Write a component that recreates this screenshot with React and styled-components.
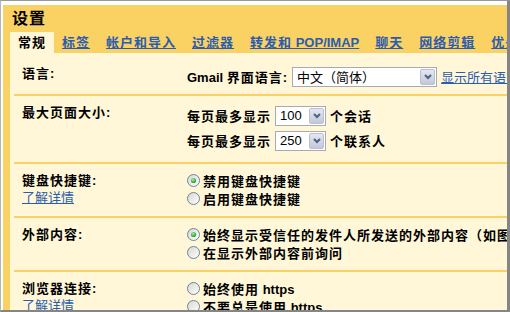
import React from 'react'
import styled, { createGlobalStyle } from 'styled-components'

const GlobalStyle = createGlobalStyle`
  html, body {
    margin: 0;
    padding: 0;
    background: #fff;
  }
  body {
    font-family: "Liberation Sans", "Noto Sans CJK SC", sans-serif;
    font-size: 13px;
    color: #000;
  }
`

const Frame = styled.div`
  box-sizing: border-box;
  width: 510px;
  height: 312px;
  overflow: hidden;
  background: #fff;
  border-style: solid;
  border-color: #9a9a9a #858585 #858585 #b4b4b4;
  border-width: 1px 3px 2px 1px;
  padding: 4px 0 0 2px;
`

const Panel = styled.div`
  width: 640px;
  background: #fad163;
  padding-left: 7px;
`

const Title = styled.h1`
  margin: 0;
  padding-left: 2px;
  height: 27px;
  line-height: 27px;
  font-size: 16px;
  font-weight: bold;
  letter-spacing: 1px;
`

const Tabs = styled.div`
  display: flex;
  height: 21px;
  white-space: nowrap;
`

const Tab = styled.a`
  padding: 0 8px;
  line-height: 21px;
  font-weight: bold;
  letter-spacing: 1px;
  color: ${({ $active }) => ($active ? '#000' : '#2a5db0')};
  background: ${({ $active }) => ($active ? '#fff7d7' : 'transparent')};
  text-decoration: ${({ $active }) => ($active ? 'none' : 'underline')};
  cursor: pointer;
`

const En = styled.span`
  letter-spacing: 0;
`

const Content = styled.div`
  background: #fff7d7;
  padding-left: 4px;
`

const Row = styled.div`
  display: grid;
  grid-template-columns: 165px 1fr;
  border-top: ${({ $first }) => ($first ? 'none' : '2px solid #fad163')};
  padding: ${({ $first }) => ($first ? '11px 0 5px 8px' : '7px 0 9px 8px')};
`

const Label = styled.div`
  padding-top: 1px;
  line-height: 17px;
  font-weight: bold;
  letter-spacing: 1px;
  white-space: nowrap;
`

const HelpLink = styled.a`
  display: block;
  width: max-content;
  font-weight: normal;
  letter-spacing: 0;
  color: #2a5db0;
  text-decoration: underline;
  cursor: pointer;
`

const Value = styled.div`
  display: flex;
  flex-direction: column;
`

const Line = styled.div`
  display: flex;
  align-items: center;
  gap: ${({ $gap }) => $gap || 4}px;
  height: ${({ $h }) => $h}px;
  font-weight: bold;
  letter-spacing: 1px;
  white-space: nowrap;
`

const TextLink = styled.a`
  font-weight: normal;
  letter-spacing: 0;
  color: #2a5db0;
  text-decoration: underline;
  cursor: pointer;
`

const SelectBox = styled.div`
  box-sizing: border-box;
  display: flex;
  align-items: center;
  flex-shrink: 0;
  width: ${({ $w }) => $w}px;
  height: 20px;
  padding-left: 4px;
  border: 1px solid #a5acb2;
  background: #fff;
  font-weight: normal;
  letter-spacing: 0;
`

const SelectText = styled.span`
  flex: 1;
`

const ArrowButton = styled.span`
  box-sizing: border-box;
  display: flex;
  align-items: center;
  justify-content: center;
  width: 15px;
  height: 16px;
  margin-right: 1px;
  border: 1px solid #bac0d2;
  border-radius: 2px;
  background: linear-gradient(#e4e7f0, #c3c8d9);
`

const RadioSvg = styled.svg`
  flex-shrink: 0;
  display: block;
`

const Select = ({ width, children }) => (
  <SelectBox $w={width}>
    <SelectText>{children}</SelectText>
    <ArrowButton>
      <svg width="8" height="6" viewBox="0 0 8 6">
        <path d="M1 1 L4 4 L7 1" fill="none" stroke="#4d6185" strokeWidth="2" />
      </svg>
    </ArrowButton>
  </SelectBox>
)

const Radio = ({ checked }) => (
  <RadioSvg width="13" height="13" viewBox="0 0 13 13">
    <defs>
      <linearGradient id="radioFill" x1="0" y1="0" x2="1" y2="1">
        <stop offset="0" stopColor="#d6d7cf" />
        <stop offset="1" stopColor="#ffffff" />
      </linearGradient>
      <radialGradient id="radioDot" cx="0.4" cy="0.35" r="0.7">
        <stop offset="0" stopColor="#a6eba6" />
        <stop offset="1" stopColor="#1c951c" />
      </radialGradient>
    </defs>
    <circle cx="6.5" cy="6.5" r="6" fill="url(#radioFill)" stroke="#6f839e" />
    {checked && <circle cx="6.5" cy="6.5" r="2.6" fill="url(#radioDot)" />}
  </RadioSvg>
)

const RadioLine = ({ checked, children }) => (
  <Line $h={18} $gap={3}>
    <Radio checked={checked} />
    <span>{children}</span>
  </Line>
)

const tabs = ['标签', '帐户和导入', '过滤器', null, '聊天', '网络剪辑', '优先收件箱']

export default function App() {
  return (
    <Frame>
      <GlobalStyle />
      <Panel>
        <Title>设置</Title>
        <Tabs>
          <Tab $active>常规</Tab>
          {tabs.map((t, i) =>
            t ? (
              <Tab key={i}>{t}</Tab>
            ) : (
              <Tab key={i}>
                转发和<En> POP/IMAP</En>
              </Tab>
            )
          )}
        </Tabs>
        <Content>
          <Row $first>
            <Label>语言:</Label>
            <Value>
              <Line $h={25}>
                <span>
                  <En>Gmail </En>界面语言:
                </span>
                <Select width={145}>中文（简体）</Select>
                <TextLink>显示所有语言</TextLink>
              </Line>
            </Value>
          </Row>
          <Row>
            <Label>最大页面大小:</Label>
            <Value>
              <Line $h={25}>
                <span>每页最多显示</span>
                <Select width={51}>100</Select>
                <span>个会话</span>
              </Line>
              <Line $h={25}>
                <span>每页最多显示</span>
                <Select width={51}>250</Select>
                <span>个联系人</span>
              </Line>
            </Value>
          </Row>
          <Row>
            <Label>
              键盘快捷键:
              <HelpLink>了解详情</HelpLink>
            </Label>
            <Value>
              <RadioLine checked>禁用键盘快捷键</RadioLine>
              <RadioLine>启用键盘快捷键</RadioLine>
            </Value>
          </Row>
          <Row>
            <Label>外部内容:</Label>
            <Value>
              <RadioLine checked>始终显示受信任的发件人所发送的外部内容（如图片）</RadioLine>
              <RadioLine>在显示外部内容前询问</RadioLine>
            </Value>
          </Row>
          <Row>
            <Label>
              浏览器连接:
              <HelpLink>了解详情</HelpLink>
            </Label>
            <Value>
              <RadioLine>
                始终使用<En> https</En>
              </RadioLine>
              <RadioLine>
                不要总是使用<En> https</En>
              </RadioLine>
            </Value>
          </Row>
        </Content>
      </Panel>
    </Frame>
  )
}
